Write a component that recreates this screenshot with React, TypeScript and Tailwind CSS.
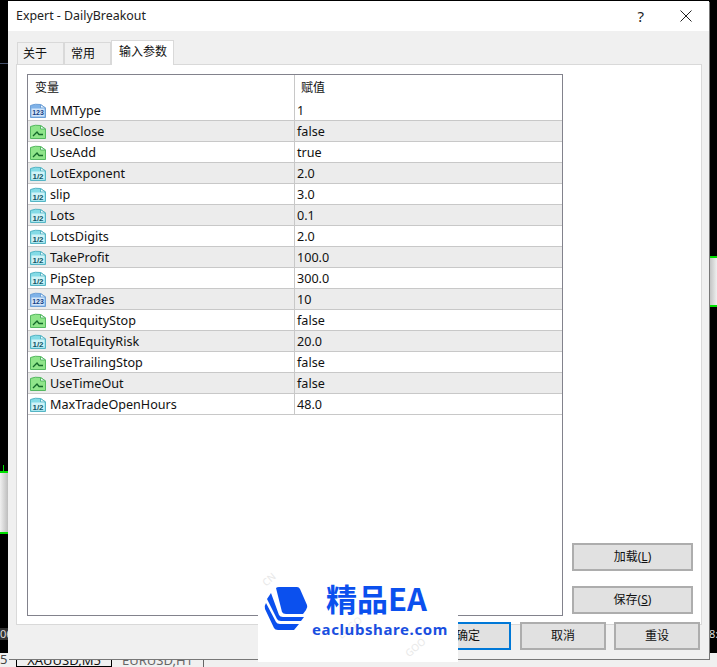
import type { ReactNode } from 'react'

type ParamKind = 'int' | 'bool' | 'real'

const params: { name: string; value: string; kind: ParamKind }[] = [
  { name: 'MMType', value: '1', kind: 'int' },
  { name: 'UseClose', value: 'false', kind: 'bool' },
  { name: 'UseAdd', value: 'true', kind: 'bool' },
  { name: 'LotExponent', value: '2.0', kind: 'real' },
  { name: 'slip', value: '3.0', kind: 'real' },
  { name: 'Lots', value: '0.1', kind: 'real' },
  { name: 'LotsDigits', value: '2.0', kind: 'real' },
  { name: 'TakeProfit', value: '100.0', kind: 'real' },
  { name: 'PipStep', value: '300.0', kind: 'real' },
  { name: 'MaxTrades', value: '10', kind: 'int' },
  { name: 'UseEquityStop', value: 'false', kind: 'bool' },
  { name: 'TotalEquityRisk', value: '20.0', kind: 'real' },
  { name: 'UseTrailingStop', value: 'false', kind: 'bool' },
  { name: 'UseTimeOut', value: 'false', kind: 'bool' },
  { name: 'MaxTradeOpenHours', value: '48.0', kind: 'real' },
]

const iconColors = {
  int: { fill: '#7fb2e8', edge: '#6d9fd6', label: '#123f85', band: '#d4e6f9' },
  bool: { fill: '#8fe58a', edge: '#55b860', label: '#14692a', band: '#8fe58a' },
  real: { fill: '#84dbe6', edge: '#55b4c4', label: '#0f5666', band: '#d0f3f7' },
}

function ParamIcon({ kind }: { kind: ParamKind }) {
  const c = iconColors[kind]
  return (
    <svg width="16" height="16" viewBox="0 0 16 16" className="shrink-0">
      <path d="M0.5 2.5 Q5 0.5 10.5 1.5 L15.5 5 V14.5 H0.5 Z" fill={c.fill} stroke={c.edge} />
      <path d="M10.5 1.5 V5 H15.5 Z" fill="#f2fbff" stroke={c.edge} />
      {kind === 'bool' && (
        <path d="M3 12 L7 8 L9 10.5 H13" fill="none" stroke={c.label} strokeWidth="1.3" />
      )}
      {kind === 'int' && (
        <>
          <rect x="1.5" y="5.5" width="13" height="8" fill={c.band} />
          <text x="8" y="12.4" textAnchor="middle" fontSize="7" fontWeight="700" fill={c.label} fontFamily="'Liberation Sans', sans-serif">
            123
          </text>
        </>
      )}
      {kind === 'real' && (
        <>
          <rect x="1.5" y="5.5" width="13" height="8" fill={c.band} />
          <text x="8" y="12.6" textAnchor="middle" fontSize="8" fontWeight="700" fill={c.label} fontFamily="'Liberation Sans', sans-serif">
            1/2
          </text>
        </>
      )}
    </svg>
  )
}

function Tab({ children, active, className }: { children: ReactNode; active?: boolean; className: string }) {
  return (
    <div
      className={
        active
          ? `relative z-10 flex h-[25px] items-center justify-center border border-b-0 border-[#d9d9d9] bg-white pb-[3px] pl-[1px] ${className}`
          : `flex h-[23px] items-center justify-start border border-b-0 border-[#d9d9d9] bg-[#f0f0f0] ${className}`
      }
    >
      {children}
    </div>
  )
}

function DialogButton({ children, className }: { children: ReactNode; className: string }) {
  return (
    <button className={`flex h-[28px] items-center justify-center border-2 bg-[#e1e1e1] text-[12px] ${className}`}>
      {children}
    </button>
  )
}

function LogoOverlay() {
  return (
    <div className="absolute left-[258px] top-[570px] h-[92px] w-[200px] overflow-hidden bg-white">
      <span className="absolute left-[4px] top-[2px] rotate-[-40deg] text-[10px] text-[#e8e8e8]">CN</span>
      <span className="absolute left-[78px] top-[50px] rotate-[-40deg] text-[10px] text-[#eeeeee]">LOGO</span>
      <span className="absolute left-[146px] top-[70px] rotate-[-40deg] text-[10px] text-[#e8e8e8]">GOO</span>
      <svg width="46" height="48" viewBox="0 0 46 48" className="absolute left-[6px] top-[16px]">
        <path d="M12 2 Q13 1 15 1 H33 Q35 1 36 3 L43 19 Q44 21 42 24 L39 28 H22 Q19 28 18 26 Z" fill="#0b50ee" />
        <path d="M7 7 L3 13 L13 33 Q14 35 17 35 H37 L40 31 H19 Q16 31 15 29 Z" fill="#0b50ee" />
        <path d="M2 17 Q0 20 1 23 L10 42 Q11 44 14 44 H30 L35 38 H16 Q13 38 12 36 Z" fill="#0b50ee" />
      </svg>
      <div className="absolute left-[68px] top-[10px] text-[31px] leading-[36px] font-bold text-[#0b50ee] [font-family:'Noto_Sans_CJK_SC','Noto_Sans',sans-serif]">
        精品EA
      </div>
      <div className="absolute left-[54px] top-[49px] text-[15px] leading-[20px] font-bold tracking-[0.6px] text-[#1a4fe0] [font-family:'Noto_Sans',sans-serif]">
        eaclubshare.com
      </div>
    </div>
  )
}

export default function App() {
  return (
    <div className="relative h-[667px] w-[717px] overflow-hidden bg-black text-[12.6px] text-[#111] [font-family:'Noto_Sans','Noto_Sans_CJK_SC',sans-serif]">
      {/* chart window behind the dialog */}
      <div className="absolute left-0 top-[471px] h-[63px] w-[8px] border-y-2 border-[#00e000] bg-linear-to-r from-[#f0f0f0] to-[#bdbdbd]" />
      <div className="absolute left-[3px] top-[465px] h-[6px] w-px bg-[#00e000]" />
      <div className="absolute right-0 top-[256px] h-[51px] w-[8px] border-y-2 border-[#00e000] bg-linear-to-r from-[#bdbdbd] to-[#f0f0f0]" />
      <div className="absolute left-0 top-[63px] h-px w-[8px] bg-[#44506a]" />
      <div className="absolute left-0 top-[628px] h-[12px] w-[8px] overflow-hidden bg-[#333] text-[11px] leading-[12px] text-[#ddd]">
        06
      </div>
      <div className="absolute right-0 top-[628px] h-[12px] w-[8px] overflow-hidden text-[11px] leading-[12px] text-[#ddd]">
        8:
      </div>
      <div className="absolute bottom-0 left-0 flex h-[14px] w-full items-end bg-[#f0f0f0] text-[13px] leading-[16px]">
        <span className="w-[16px] text-[#444]">5</span>
        <div className="h-[9px] w-[96px] border-x border-b border-black text-center leading-[4px]">XAUUSD,M5</div>
        <div className="h-[9px] w-[92px] border-r border-[#666] text-center leading-[4px] text-[#666]">EURUSD,H1</div>
      </div>

      <div className="relative ml-[8px] mt-[1px] flex h-[658px] w-[701px] flex-col bg-[#f0f0f0] shadow-[1px_1px_0_#777]">
        <header className="flex h-[30px] items-center justify-between bg-white pl-[8px] pr-[17px]">
          <span className="text-[12.4px] text-[#222]">Expert - DailyBreakout</span>
          <div className="flex items-center gap-[36px]">
            <span className="text-[15px] text-[#222]">?</span>
            <svg width="12" height="12" viewBox="0 0 12 12">
              <path d="M0.5 0.5 L11.5 11.5 M11.5 0.5 L0.5 11.5" stroke="#222" strokeWidth="1" />
            </svg>
          </div>
        </header>

        <div className="flex h-[34px] items-end pl-[9px]">
          <Tab className="w-[47px] pl-[5px] text-[12px]">关于</Tab>
          <Tab className="w-[47px] pl-[6px] text-[12px]">常用</Tab>
          <Tab active className="w-[63px] text-[12px]">
            输入参数
          </Tab>
        </div>

        <div className="mx-[8px] -mt-px flex h-[561px] w-[686px] border border-[#d9d9d9] bg-white pb-[8px] pl-[10px] pr-[8px] pt-[9px]">
          <div className="flex h-full w-[536px] flex-col border border-[#82828c]">
            <div className="flex h-[25px] shrink-0 items-center text-[12px]">
              <div className="flex h-full w-[267px] items-center border-r border-[#c8c8c8] pl-[7px]">变量</div>
              <div className="pl-[6px]">赋值</div>
            </div>
            {params.map((p, i) => (
              <div
                key={p.name}
                className={`flex h-[21px] shrink-0 items-center border-b border-[#c8c8c8] ${i % 2 === 1 ? 'bg-[#ececec]' : 'bg-white'}`}
              >
                <div className="flex h-full w-[267px] items-center gap-[4px] border-r border-[#c8c8c8] pl-[2px] pt-[2px]">
                  <ParamIcon kind={p.kind} />
                  <span>{p.name}</span>
                </div>
                <div className="pl-[2px] pt-[2px]">{p.value}</div>
              </div>
            ))}
          </div>

          <div className="ml-[9px] flex flex-1 flex-col items-end justify-end gap-[15px] pb-[2px]">
            <DialogButton className="w-[121px] border-[#adadad]">
              <span>
                加载(<span className="underline">L</span>)
              </span>
            </DialogButton>
            <DialogButton className="w-[121px] border-[#adadad]">
              <span>
                保存(<span className="underline">S</span>)
              </span>
            </DialogButton>
          </div>
        </div>

        <div className="-mt-[3px] flex justify-end gap-[8px] pr-[9px]">
          <DialogButton className="mr-[1px] w-[86px] border-[#0078d7]">确定</DialogButton>
          <DialogButton className="w-[86px] border-[#adadad]">取消</DialogButton>
          <DialogButton className="w-[86px] border-[#adadad]">重设</DialogButton>
        </div>
      </div>

      <LogoOverlay />
    </div>
  )
}
